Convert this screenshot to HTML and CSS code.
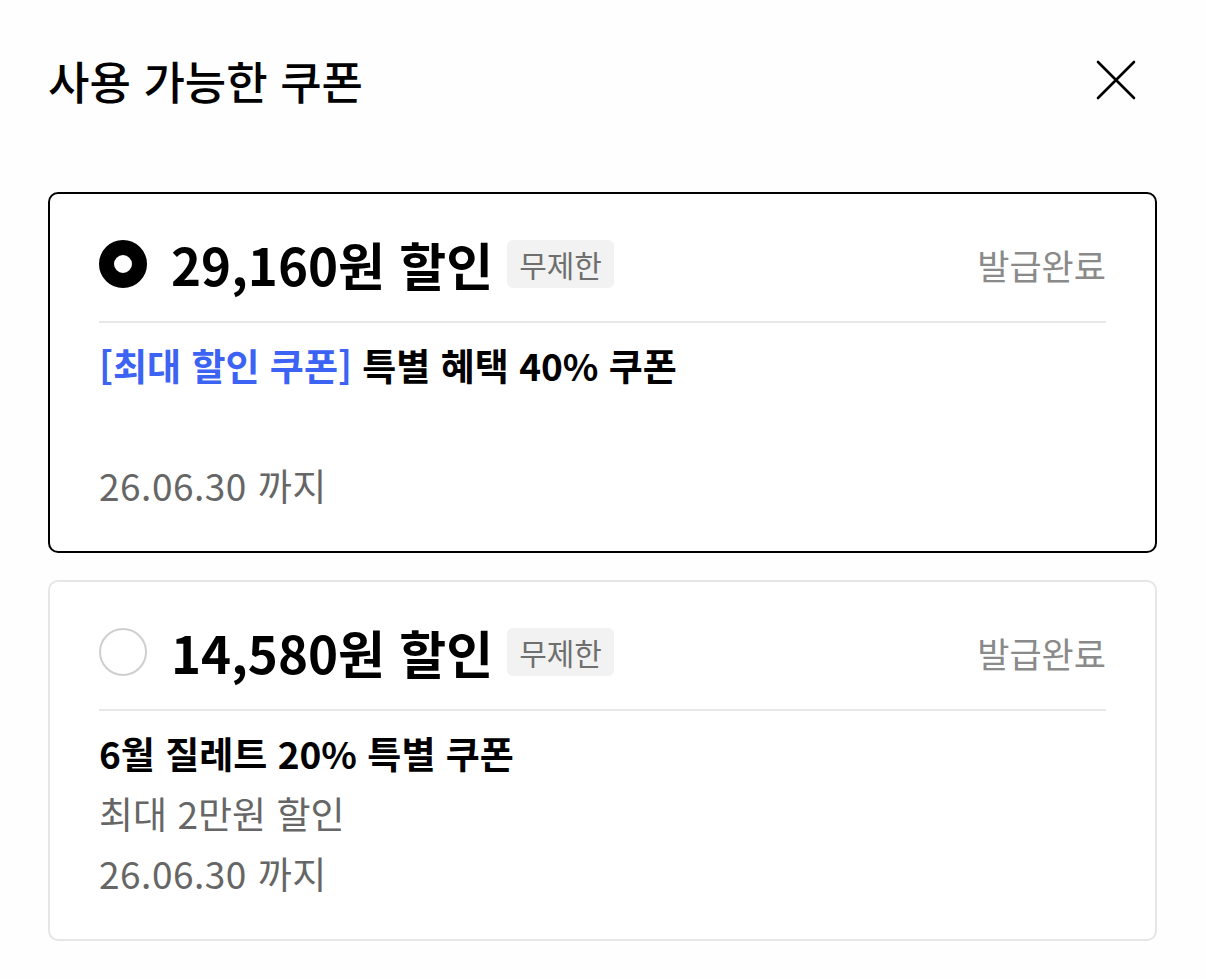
FILE: index.html
```html
<!DOCTYPE html>
<html lang="ko">
<head>
    <meta charset="utf-8">
    <link rel="stylesheet" href="styles.css">
</head>
<body>
    <div class="sheet">
        <div class="header">
            <div class="title">사용 가능한 쿠폰</div>
            <button class="close-btn" aria-label="닫기">
                <svg width="40" height="40" viewBox="0 0 40 40">
                    <path d="M2 2 L38 38 M38 2 L2 38" stroke="#000" stroke-width="2.6" stroke-linecap="round" fill="none"/>
                </svg>
            </button>
        </div>

        <div class="coupon-list">
            <div class="coupon selected">
                <div class="coupon-head">
                    <span class="radio"></span>
                    <span class="amount">29,160원 할인</span>
                    <span class="badge">무제한</span>
                    <span class="status">발급완료</span>
                </div>
                <div class="divider"></div>
                <div class="coupon-body">
                    <div class="coupon-name"><span class="tag">[최대 할인 쿠폰]</span> 특별 혜택 40% 쿠폰</div>
                    <div class="coupon-desc"></div>
                    <div class="coupon-date">26.06.30 까지</div>
                </div>
            </div>

            <div class="coupon">
                <div class="coupon-head">
                    <span class="radio"></span>
                    <span class="amount">14,580원 할인</span>
                    <span class="badge">무제한</span>
                    <span class="status">발급완료</span>
                </div>
                <div class="divider"></div>
                <div class="coupon-body">
                    <div class="coupon-name">6월 질레트 20% 특별 쿠폰</div>
                    <div class="coupon-desc">최대 2만원 할인</div>
                    <div class="coupon-date">26.06.30 까지</div>
                </div>
            </div>
        </div>
    </div>
</body>
</html>
```

FILE: styles.css
```css
* {
    margin: 0;
    padding: 0;
    box-sizing: border-box;
}

body {
    background: #fefefe;
    font-family: "Noto Sans CJK KR", "Noto Sans", sans-serif;
    color: #000;
}

.sheet {
    padding: 0 49px 0 48px;
}

.header {
    height: 160px;
    display: flex;
    align-items: center;
    justify-content: space-between;
}

.title {
    font-size: 45px;
    font-weight: 500;
}

.close-btn {
    width: 40px;
    height: 40px;
    border: none;
    background: none;
    margin-right: 21px;
    display: flex;
    cursor: pointer;
}

.coupon-list {
    display: flex;
    flex-direction: column;
    gap: 27px;
    margin-top: 32px;
}

.coupon {
    height: 361px;
    border: 2px solid #e6e6e6;
    border-radius: 10px;
    padding: 45px 49px 0 49px;
    background: #fff;
}

.coupon.selected {
    border-color: #000;
}

.coupon-head {
    height: 50px;
    display: flex;
    align-items: center;
}

.radio {
    width: 48px;
    height: 48px;
    border-radius: 50%;
    border: 2px solid #cfcfcf;
    flex-shrink: 0;
    margin-right: 24px;
}

.selected .radio {
    border: 15px solid #000;
}

.amount {
    font-size: 51px;
    font-weight: 700;
    line-height: 1;
}

.badge {
    margin-left: 14px;
    height: 48px;
    padding: 0 12px;
    display: flex;
    align-items: center;
    background: #f2f2f2;
    border-radius: 6px;
    font-size: 30px;
    color: #6f6f6f;
}

.status {
    margin-left: auto;
    font-size: 35px;
    color: #8a8a8a;
}

.divider {
    height: 2px;
    background: #e8e8e8;
    margin-top: 32px;
}

.coupon-body {
    margin-top: 12px;
}

.coupon-name,
.coupon-desc,
.coupon-date {
    height: 60px;
    line-height: 60px;
    font-size: 37px;
}

.coupon-name {
    font-weight: 700;
}

.tag {
    color: #3c63f4;
}

.coupon-desc,
.coupon-date {
    color: #666;
}

.coupon-date {
    letter-spacing: 0.5px;
}
```
